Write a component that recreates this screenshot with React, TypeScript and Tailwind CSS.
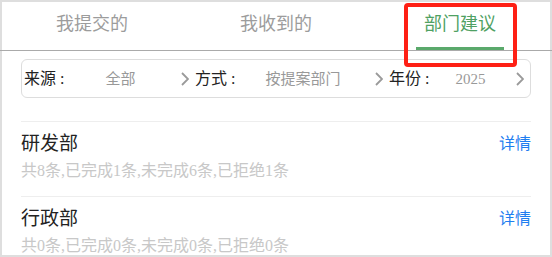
const tabs = [
  { key: 'mine', label: '我提交的' },
  { key: 'received', label: '我收到的' },
  { key: 'dept', label: '部门建议' },
];

const filters = [
  { label: '来源 :', value: '全部', width: 'w-[171px]' },
  { label: '方式 :', value: '按提案部门', width: 'w-[194px]' },
  { label: '年份 :', value: '2025', width: 'flex-1' },
];

const depts = [
  { name: '研发部', summary: '共8条,已完成1条,未完成6条,已拒绝1条' },
  { name: '行政部', summary: '共0条,已完成0条,未完成0条,已拒绝0条' },
];

function Chevron() {
  return (
    <svg width="8" height="14" viewBox="0 0 8 14" className="shrink-0">
      <polyline points="1,1 7,7 1,13" fill="none" stroke="#9a9a9a" strokeWidth="1.8" />
    </svg>
  );
}

export default function App() {
  const active = 'dept';

  return (
    <div className="relative w-[552px] h-[257px] overflow-hidden bg-white shadow-[inset_0_0_0_2px_#dedede] font-['Liberation_Serif','Noto_Sans_CJK_SC',serif]">
      {/* Tabs */}
      <div className="flex h-[51px] border-b border-[#aaaaaa]">
        {tabs.map((tab) => (
          <div key={tab.key} className="relative flex-1 pt-[12px] text-center">
            <span
              className={`text-[18px] leading-6 ${
                tab.key === active ? 'text-[#4fa163]' : 'text-[#9c9c9c]'
              }`}
            >
              {tab.label}
            </span>
            {tab.key === active && (
              <div className="absolute bottom-0 left-1/2 h-[3px] w-[88px] -translate-x-1/2 bg-[#5aa96b]" />
            )}
          </div>
        ))}
      </div>

      {/* Filter bar */}
      <div className="mx-[21px] mt-[8px] flex h-[39px] items-center rounded-[6px] border border-[#dddddd] pl-[2px]">
        {filters.map((f) => (
          <div key={f.label} className={`flex items-center pr-[6px] ${f.width}`}>
            <span className="w-[48px] shrink-0 whitespace-pre text-[16px] leading-6 text-[#222]">{f.label}</span>
            <span className="flex-1 pr-3 text-center text-[15px] leading-6 text-[#999]">{f.value}</span>
            <Chevron />
          </div>
        ))}
      </div>

      {/* Department list */}
      <div className="mx-[21px] mt-[23px]">
        {depts.map((d) => (
          <div key={d.name} className="border-t border-[#eeeeee] pt-[10px] pb-[13px]">
            <div className="flex items-center justify-between">
              <span className="text-[19px] leading-6 text-[#222]">{d.name}</span>
              <span className="text-[16px] leading-6 text-[#1f7ef0]">详情</span>
            </div>
            <div className="mt-[3px] text-[16px] leading-6 text-[#c8c8c8]">{d.summary}</div>
          </div>
        ))}
      </div>

      {/* Annotation box */}
      <div className="pointer-events-none absolute left-[404px] top-[3px] h-[64px] w-[113px] rounded-[4px] border-4 border-[#fe2015]" />
    </div>
  );
}
